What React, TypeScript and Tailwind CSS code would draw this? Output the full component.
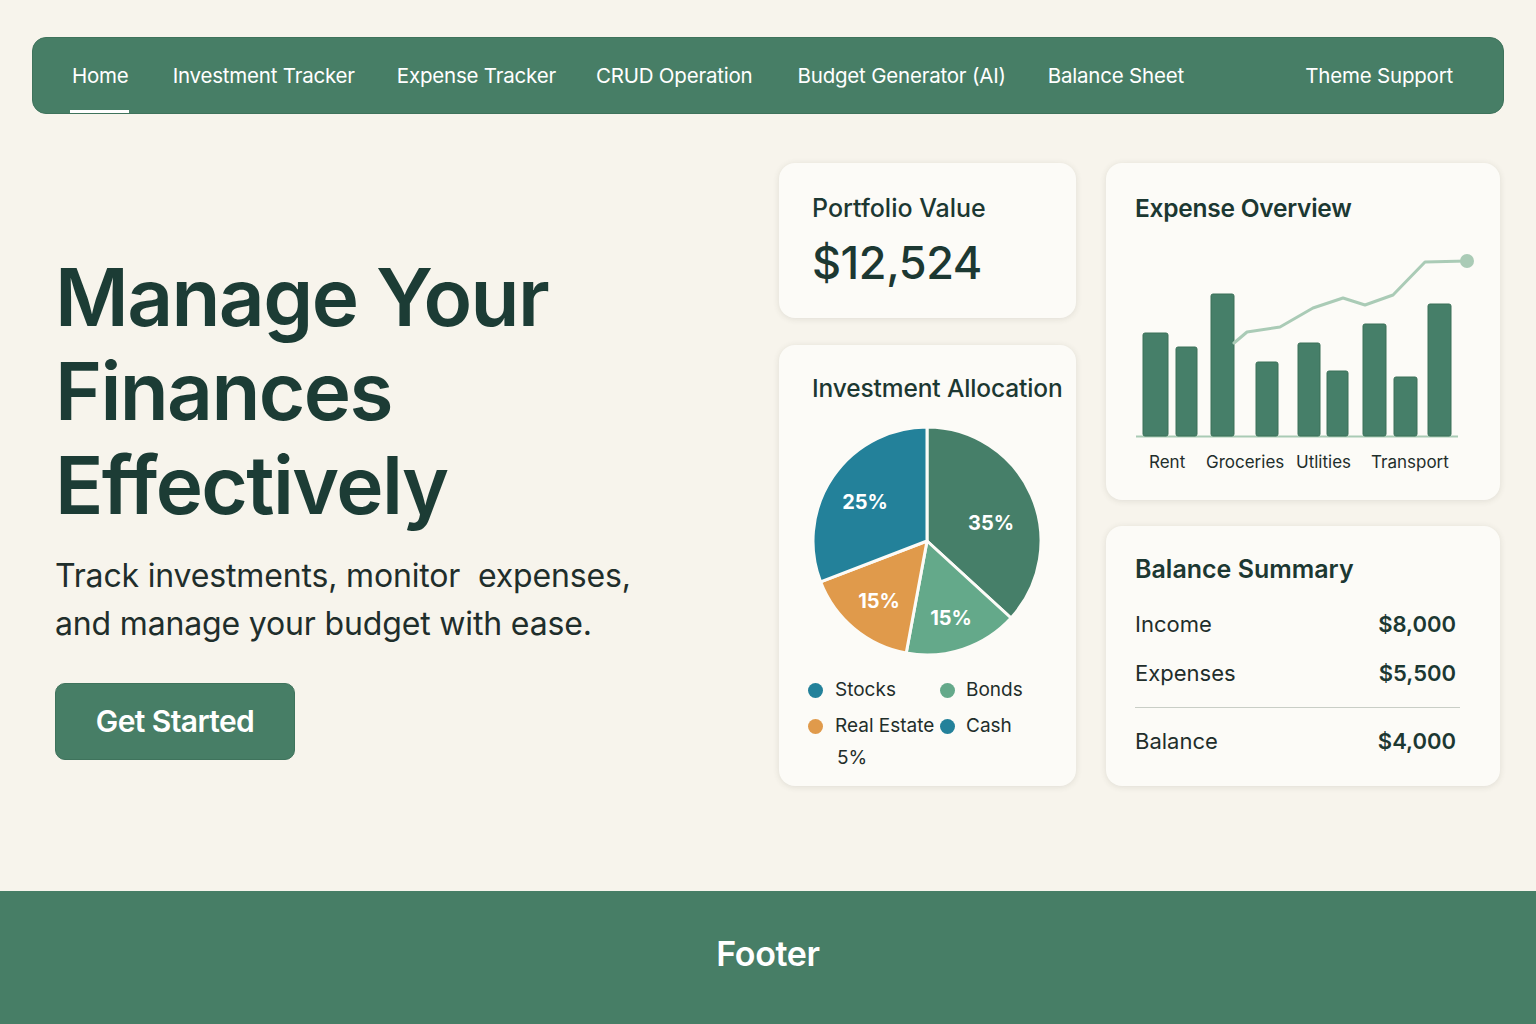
const navItems = [
  'Home',
  'Investment Tracker',
  'Expense Tracker',
  'CRUD Operation',
  'Budget Generator (AI)',
  'Balance Sheet',
];

const slices = [
  { from: 0, to: 132.5, color: '#467f69', label: '35%', lx: 180, ly: 100 },
  { from: 132.5, to: 190.5, color: '#64a98a', label: '15%', lx: 140, ly: 195 },
  { from: 190.5, to: 249, color: '#e09a4b', label: '15%', lx: 68, ly: 178 },
  { from: 249, to: 360, color: '#23819a', label: '25%', lx: 54, ly: 79 },
];

const bars = [
  { x: 7, w: 25, top: 333 },
  { x: 40, w: 21, top: 347 },
  { x: 75, w: 23, top: 294 },
  { x: 120, w: 22, top: 362 },
  { x: 162, w: 22, top: 343 },
  { x: 191, w: 21, top: 371 },
  { x: 227, w: 23, top: 324 },
  { x: 258, w: 23, top: 377 },
  { x: 292, w: 23, top: 304 },
];

const linePts = [
  [98, 343], [111, 332], [144, 327], [177, 308], [207, 298], [229, 305], [257, 295], [289, 262], [331, 261],
];

function pt(cx: number, cy: number, r: number, deg: number) {
  const a = (deg * Math.PI) / 180;
  return [cx + r * Math.sin(a), cy - r * Math.cos(a)];
}

function arcPath(from: number, to: number) {
  const [x1, y1] = pt(116, 116, 114, from);
  const [x2, y2] = pt(116, 116, 114, to);
  const large = to - from > 180 ? 1 : 0;
  return `M116 116 L${x1} ${y1} A114 114 0 ${large} 1 ${x2} ${y2} Z`;
}

function PieChart() {
  return (
    <svg width="232" height="232" viewBox="0 0 232 232">
      {slices.map((s, i) => (
        <path key={i} d={arcPath(s.from, s.to)} fill={s.color} stroke="#fcfbf7" strokeWidth="3" strokeLinejoin="round" />
      ))}
      {slices.map((s, i) => (
        <text
          key={'t' + i}
          x={s.lx}
          y={s.ly}
          textAnchor="middle"
          dominantBaseline="middle"
          fill="#ffffff"
          fontSize="20"
          fontWeight="700"
          fontFamily="Inter, sans-serif"
        >
          {s.label}
        </text>
      ))}
    </svg>
  );
}

function BarChart() {
  // origin of svg is page x 1136, y 240
  const pts = linePts.map(([x, y]) => `${x},${y - 240}`).join(' ');
  return (
    <svg width="340" height="200" viewBox="0 0 340 200" className="overflow-visible">
      <line x1="0" y1="196.5" x2="322" y2="196.5" stroke="#a9cbb5" strokeWidth="2" />
      {bars.map((b, i) => (
        <rect key={i} x={b.x} y={b.top - 240} width={b.w} height={436 - b.top} rx="2" fill="#467f69" stroke="#3b7058" strokeWidth="1" />
      ))}
      <polyline points={pts} fill="none" stroke="#aacbb6" strokeWidth="3" strokeLinejoin="round" strokeLinecap="round" />
      <circle cx="331" cy="21" r="7" fill="#aacbb6" />
    </svg>
  );
}

function Card({ className, children }: { className: string; children: React.ReactNode }) {
  return (
    <div className={`rounded-2xl bg-[#fcfbf7] shadow-[0_1px_6px_rgba(60,60,40,0.12)] ${className}`}>{children}</div>
  );
}

export default function App() {
  return (
    <div className="min-h-screen w-full flex flex-col bg-[#f7f4ec] text-[#1c3832]" style={{ fontFamily: 'Inter, "Noto Sans", sans-serif' }}>
      {/* Nav */}
      <div className="px-8 pt-[37px]">
        <nav className="h-[77px] rounded-[14px] bg-[#477e66] border border-[#3f735c] flex items-center pl-[39px] pr-[50px] text-white text-[20.5px] tracking-[-0.01em]">
          {navItems.map((item, i) => (
            <a
              key={item}
              className={`relative h-full flex items-center pt-[2px] ${
                ['mr-[44px]', 'mr-[42px]', 'mr-[40px]', 'mr-[45px]', 'mr-[42px]', ''][i]
              }`}
            >
              {item}
              {i === 0 && <span className="absolute left-[-2px] right-0 bottom-[0px] h-[3px] bg-white" />}
            </a>
          ))}
          <a className="ml-auto pt-[2px]">Theme Support</a>
        </nav>
      </div>

      {/* Main */}
      <main className="flex pl-[55px] pr-[36px] pt-[49px] pb-[105px]">
        <section className="flex-1 pt-[87px]">
          <h1 className="text-[80px] leading-[94px] font-semibold tracking-[-0.02em] text-[#1c3c35]">
            Manage Your
            <br />
            Finances
            <br />
            Effectively
          </h1>
          <p className="mt-[20px] text-[32px] leading-[48px] text-[#1f2e2b] tracking-[-0.005em] whitespace-pre">
            {'Track investments, monitor  expenses,\nand manage your budget with ease.'}
          </p>
          <button className="mt-[35px] w-[240px] h-[77px] rounded-[10px] bg-[#477e66] border border-[#3f735c] text-white text-[30px] font-semibold tracking-[-0.02em]">
            Get Started
          </button>
        </section>

        <div className="flex gap-[30px]">
          <div className="w-[297px] flex flex-col gap-[27px]">
            <Card className="h-[155px] px-[33px] pt-[30px]">
              <div className="text-[25px] font-medium leading-[30px]">Portfolio Value</div>
              <div className="mt-[12px] text-[45px] font-medium leading-[56px] tracking-[-0.01em]">$12,524</div>
            </Card>
            <Card className="h-[441px] px-[33px] pt-[28px]">
              <div className="text-[24.5px] font-medium leading-[30px] whitespace-nowrap tracking-[-0.005em]">Investment Allocation</div>
              <div className="mt-[22px] ml-[-1px]">
                <PieChart />
              </div>
              <div className="mt-[22px] ml-[-4px] grid grid-cols-[132px_1fr] gap-y-[14px] text-[19px] leading-[22px] text-[#1f2e2b]">
                <div className="flex items-center gap-[12px]">
                  <span className="w-[15px] h-[15px] rounded-full bg-[#23819a]" />
                  Stocks
                </div>
                <div className="flex items-center gap-[11px]">
                  <span className="w-[15px] h-[15px] rounded-full bg-[#64a98a]" />
                  Bonds
                </div>
                <div className="flex items-center gap-[12px] whitespace-nowrap">
                  <span className="w-[15px] h-[15px] rounded-full bg-[#e09a4b]" />
                  Real Estate
                </div>
                <div className="flex items-center gap-[11px]">
                  <span className="w-[15px] h-[15px] rounded-full bg-[#23819a]" />
                  Cash
                </div>
              </div>
              <div className="ml-[25px] mt-[10px] text-[19px] leading-[22px] text-[#1f2e2b]">5%</div>
            </Card>
          </div>

          <div className="w-[394px] flex flex-col gap-[26px]">
            <Card className="h-[337px] pl-[29px] pt-[30px]">
              <div className="text-[24.5px] font-semibold leading-[30px] tracking-[-0.01em]">Expense Overview</div>
              <div className="mt-[17px] ml-[1px]">
                <BarChart />
              </div>
              <div className="relative h-[24px] mt-[10px] text-[17px] text-[#1f2e2b]">
                <span className="absolute left-[14px]">Rent</span>
                <span className="absolute left-[71px]">Groceries</span>
                <span className="absolute left-[161px]">Utlities</span>
                <span className="absolute left-[236px]">Transport</span>
              </div>
            </Card>
            <Card className="h-[260px] pl-[29px] pr-[44px] pt-[28px]">
              <div className="text-[25px] font-semibold leading-[30px]">Balance Summary</div>
              <div className="mt-[27px] flex justify-between items-center text-[22px] leading-[26px]">
                <span className="text-[#1f2e2b]">Income</span>
                <span className="font-semibold">$8,000</span>
              </div>
              <div className="mt-[23px] flex justify-between items-center text-[22px] leading-[26px]">
                <span className="text-[#1f2e2b]">Expenses</span>
                <span className="font-semibold">$5,500</span>
              </div>
              <div className="mt-[21px] mr-[-4px] h-px bg-[#c9cec6]" />
              <div className="mt-[20px] flex justify-between items-center text-[22px] leading-[26px]">
                <span className="text-[#1f2e2b]">Balance</span>
                <span className="font-semibold">$4,000</span>
              </div>
            </Card>
          </div>
        </div>
      </main>

      {/* Footer */}
      <footer className="mt-auto h-[133px] pb-[8px] bg-[#477e66] flex items-center justify-center text-white text-[34px] font-semibold tracking-[-0.01em]">
        Footer
      </footer>
    </div>
  );
}
